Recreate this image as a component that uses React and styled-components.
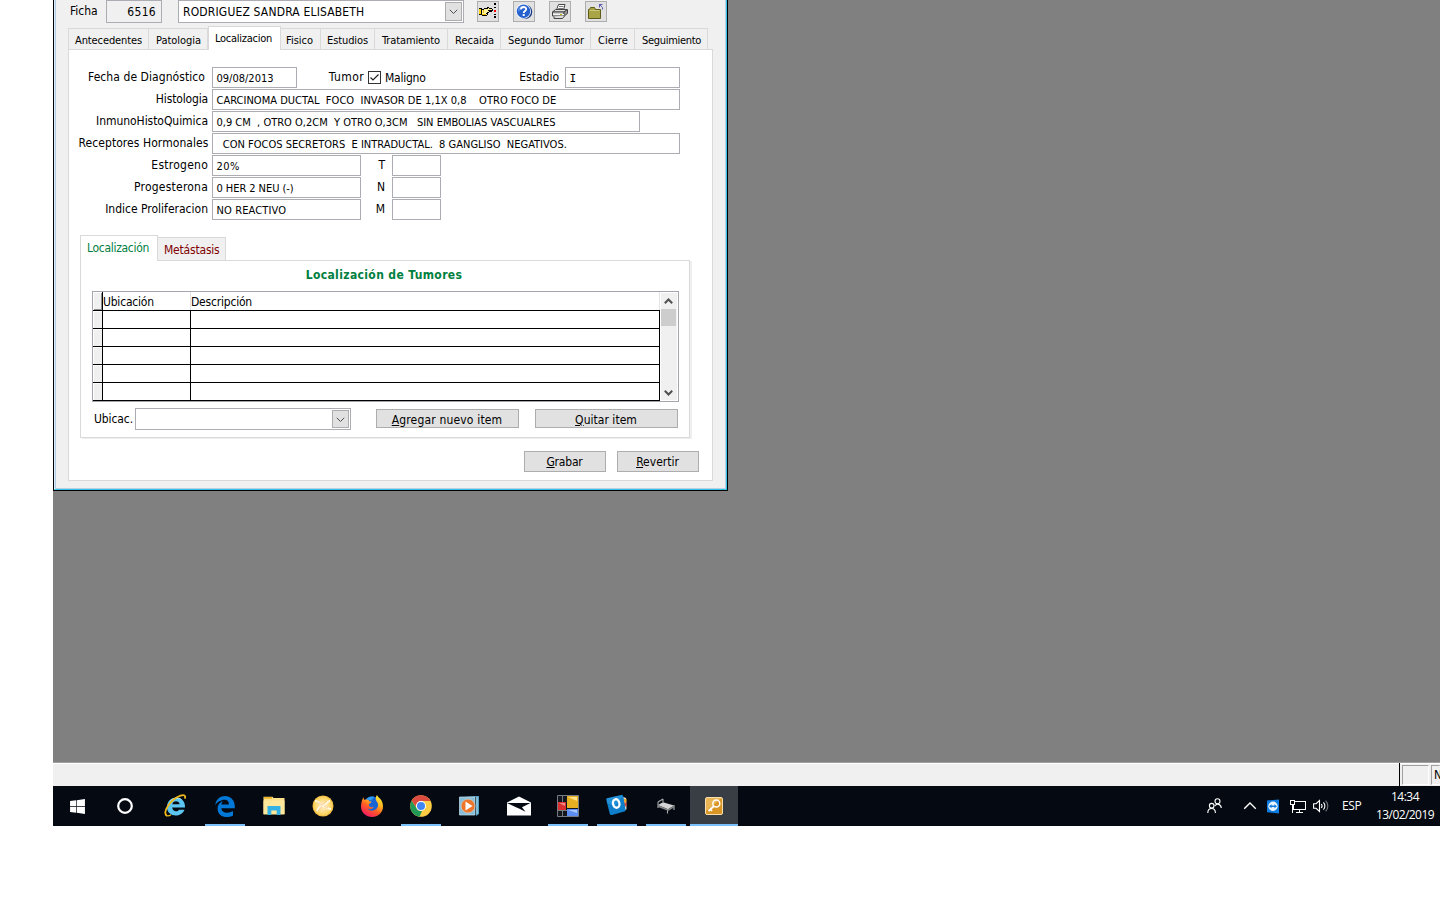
import React from "react";
import styled, { createGlobalStyle, css } from "styled-components";
import { FaWindows } from "react-icons/fa";

const Global = createGlobalStyle`
  * { box-sizing: border-box; }
  body { margin: 0; background: #fff; overflow: hidden; }
`;

const ui = '"DejaVu Sans Condensed", "DejaVu Sans", sans-serif';
const segoe = '"Open Sans", "Noto Sans", sans-serif';

/* ---------- shared text ---------- */
const Text = styled.span`
  white-space: pre;
  flex: none;
  font-family: ${(p) => (p.$slab ? '"DejaVu Sans Mono", monospace' : ui)};
  font-size: ${(p) => (p.$small ? 11 : 12)}px;
  line-height: 14px;
  letter-spacing: ${(p) => p.$track || 0}px;
  color: ${(p) => p.$color || "#000"};
  font-weight: ${(p) => (p.$bold ? 700 : 400)};
  u { text-underline-offset: 1px; text-decoration-thickness: 1px; }
`;

/* ---------- application frame ---------- */
const Screen = styled.main`
  width: 1387px;
  height: 826px;
  margin-left: 53px;
  display: flex;
  flex-direction: column;
  overflow: hidden;
`;
const Workspace = styled.section`
  height: 762px;
  background: #808080;
`;
const WindowFrame = styled.div`
  width: 675px;
  height: 491px;
  border: solid #000;
  border-width: 0 1px 1px 1px;
`;
const WindowBody = styled.div`
  height: 490px;
  background: #f0f0f0;
  border: solid #35c3e8;
  border-width: 0 1px 1px 1px;
  border-left-color: #dcebf8;
  box-shadow: inset -1px -1px 0 #b9cfe6, inset 1px 0 0 #b4cde6;
  padding: 0 12px 0 13px;
`;

/* ---------- header ---------- */
const Header = styled.header`
  height: 26px;
  display: flex;
  align-items: flex-start;
`;
const HeaderLabel = styled.div`
  width: 38px;
  padding: 4px 0 0 2px;
  display: flex;
`;
const RecordBox = styled.div`
  width: 56px;
  height: 23px;
  border: 1px solid #abadb3;
  display: flex;
  justify-content: flex-end;
  padding: 4px 5px 0 0;
  margin-right: 16px;
`;
const Combo = styled.div`
  width: ${(p) => p.$w}px;
  height: ${(p) => p.$h}px;
  flex: none;
  border: 1px solid #abadb3;
  background: #fff;
  display: flex;
  justify-content: space-between;
  padding: 1px 1px 1px 4px;
`;
const ComboText = styled.div`
  display: flex;
  align-items: flex-start;
  padding-top: 3px;
`;
const ComboArrow = styled.div`
  width: 17px;
  border: 1px solid #adadad;
  background: #e1e1e1;
  display: flex;
  align-items: center;
  justify-content: center;
`;
const ToolBar = styled.div`
  display: flex;
  gap: 14px;
  padding: 1px 0 0 13px;
`;
const ToolButton = styled.div`
  width: 22px;
  height: 21px;
  border: 1px solid #adadad;
  background: #e1e1e1;
  display: flex;
  align-items: center;
  justify-content: center;
  svg { display: block; }
`;

/* ---------- tabs ---------- */
const Tabs = styled.nav`
  height: ${(p) => p.$h}px;
  display: flex;
  align-items: flex-end;
`;
const Tab = styled.div`
  width: ${(p) => p.$w}px;
  height: ${(p) => p.$h || 21}px;
  flex: none;
  border: solid #d9d9d9;
  border-width: 1px 1px 0 ${(p) => (p.$first ? 1 : 0)}px;
  padding: 5px 0 0 ${(p) => p.$left}px;
  display: flex;
  align-items: flex-start;
  ${(p) => !p.$active && css`background: #f0f0f0;`}
  ${(p) => p.$active && css`
    border-left-width: 1px;
    background: #fff;
    margin-bottom: -1px;
  `}
`;
const Page = styled.section`
  width: 645px;
  height: 432px;
  border: 1px solid #d9d9d9;
  background: #fff;
  padding-top: 17px;
`;

/* ---------- form ---------- */
const Row = styled.div`
  height: 22px;
  display: flex;
`;
const Label = styled.label`
  width: 143px;
  flex: none;
  padding: 3px ${(p) => p.$gap || 4}px 0 0;
  display: flex;
  justify-content: flex-end;
`;
const InlineLabel = styled(Label)`
  width: ${(p) => p.$w}px;
`;
const Field = styled.div`
  width: ${(p) => p.$w}px;
  height: 21px;
  flex: none;
  border: 1px solid #abadb3;
  background: #fff;
  padding: 4px 0 0 3.5px;
  display: flex;
`;
const CheckBox = styled.div`
  width: 13px;
  height: 13px;
  margin: 4px 4px 0 0;
  border: 1px solid #333;
  background: #fff;
  svg { display: block; }
`;
const CheckLabel = styled.div`
  width: 49px;
  padding-top: 4px;
  display: flex;
  align-items: flex-start;
`;

/* ---------- tumour location ---------- */
const Location = styled.section`
  width: 612px;
  margin: 14px 0 0 11px;
`;
const LocationPage = styled.div`
  width: 610px;
  height: 178px;
  border: 1px solid #d9d9d9;
  background: #fff;
  box-shadow: 2px 1px 0 #efefef;
  padding: 7px 0 0 11px;
`;
const Title = styled.h2`
  height: 23px;
  width: 587px;
  margin: 0;
  display: flex;
  justify-content: center;
  padding-right: 3px;
`;
const GridFrame = styled.div`
  width: 587px;
  height: 111px;
  border: 1px solid #a5a5ad;
  background: #fff;
  display: flex;
  justify-content: space-between;
  padding-right: 1px;
`;
const Cells = styled.div`width: 567px;`;
const GridRow = styled.div`
  height: 18px;
  display: grid;
  grid-template-columns: 10px 88px 469px;
  border-bottom: 1px solid #000;
  ${(p) => p.$head && css`height: 19px;`}
`;
const Selector = styled.div`
  border-right: 1px solid #000;
  background: #f0f0f0;
  box-shadow: inset 1px 1px 0 #fff${(p) => p.$head && ", inset -1px -1px 0 #8c8c8c"};
`;
const Cell = styled.div`
  border-right: 1px solid ${(p) => (p.$head ? "#e3e3e3" : "#000")};
  padding-top: 3px;
  display: flex;
`;
const ScrollTrack = styled.div`
  width: 16px;
  height: 107px;
  margin-top: 1px;
  background: #f0f0f0;
  display: flex;
  flex-direction: column;
  align-items: flex-start;
`;
const ScrollThumb = styled.div`
  width: 15px;
  height: 17px;
  background: #cdcdcd;
  margin: 0 0 59px;
`;
const ScrollButton = styled.div`
  width: 15px;
  height: ${(p) => p.$h}px;
  display: flex;
  align-items: center;
  justify-content: center;
`;
const Actions = styled.div`
  display: flex;
  align-items: flex-start;
  padding-top: 6px;
`;
const ActionLabel = styled.div`
  width: 43px;
  padding: 4px 0 0 2px;
  display: flex;
`;
const Button = styled.div`
  width: ${(p) => p.$w}px;
  height: ${(p) => p.$h}px;
  flex: none;
  border: 1px solid #adadad;
  background: #e1e1e1;
  display: flex;
  justify-content: center;
  padding: 3px 1px 0 0;
  margin: ${(p) => (p.$drop ? 1 : 0)}px 0 0 ${(p) => p.$left || 0}px;
`;
const Footer = styled.footer`
  display: flex;
  gap: 11px;
  padding: 13px 0 0 455px;
`;

/* ---------- status bar ---------- */
const StatusBar = styled.div`
  height: 24px;
  background: #f0f0f0;
  border-top: 1px solid #a0a0a0;
  box-shadow: inset 0 1px 0 #fff;
  display: flex;
  justify-content: flex-end;
`;
const StatusWell = styled.div`
  height: 20px;
  margin: 2px 0 0 2px;
  width: ${(p) => p.$w}px;
  border: 1px solid #a0a0a0;
  border-right-color: ${(p) => (p.$open ? "transparent" : "#fff")};
  border-bottom-color: #fff;
  padding: 2px 0 0 2px;
  display: flex;
  align-items: flex-start;
`;
const StatusDivider = styled.div`
  width: 1px;
  background: #000;
`;

/* ---------- task bar ---------- */
const TaskBar = styled.div`
  height: 40px;
  background: #050a12;
  display: flex;
  justify-content: space-between;
`;
const Apps = styled.div`display: flex;`;
const AppButton = styled.div`
  width: ${(p) => p.$w || 49}px;
  height: 40px;
  display: flex;
  align-items: center;
  justify-content: center;
  color: #fff;
  background: ${(p) => (p.$current ? "#393e44" : "none")};
  ${(p) => p.$running && css`
    background-image: linear-gradient(#7cc0fa, #7cc0fa);
    background-size: ${p.$current ? 48 : 40}px 2px;
    background-position: center bottom;
    background-repeat: no-repeat;
  `}
`;
const Tray = styled.div`
  display: flex;
  align-items: center;
`;
const TrayIcon = styled.div`
  width: ${(p) => p.$w}px;
  display: flex;
  justify-content: center;
  svg { display: block; flex: none; }
`;
const TrayText = styled.span`
  font: 12px/18px ${segoe};
  letter-spacing: ${(p) => p.$track}px;
  color: #fff;
`;
const Language = styled.div`
  width: 45px;
  padding: 0 0 2px 17px;
`;
const Clock = styled.div`
  width: 70px;
  padding-top: 2px;
  height: 40px;
  display: flex;
  flex-direction: column;
  align-items: center;
`;

/* ---------- drawings ---------- */
const Chevron = ({ up, w = 1, color = "#505050", size = 9 }) => (
  <svg width={size} height={size} viewBox="0 0 9 9" fill="none" stroke={color} strokeWidth={w}>
    <path d={up ? "M.8 6.2 4.5 2.5l3.7 3.7" : "M.8 2.8 4.5 6.5l3.7-3.7"} />
  </svg>
);
const Hand = () => (
  <svg width="18" height="17" viewBox="0 0 18 17" shapeRendering="crispEdges">
    <path fill="#000" d="M0 5h3v1h2V5h3V4h2v1h3v1h1v2h-1v1h-3v1h-1v1H9v1H8v1H3v-1H0z" />
    <path fill="#ffd800" d="M0 6h2v5H0z" />
    <path fill="#fff3a0" d="M3 7h2V6h4V5h1v1h3v1H9v1h1v1H8v1H7v1h1v1H3z" />
    <path fill="#e9bf00" d="M3 11h4v1H3zM4 7h1v3H4z" />
    <path fill="#000" d="M15 0h2v2h-2zM15 4h2v1h-2zM15 11h2v1h-2zM15 13h2v2h-2z" />
    <path fill="#f00" d="M15 7h2v2h-2z" />
  </svg>
);
const Help = () => (
  <svg width="18" height="17" viewBox="0 0 18 17">
    <circle cx="10" cy="8.800" r="7.300" fill="#183a82" />
    <circle cx="8.500" cy="8.200" r="7.500" fill="#fff" />
    <circle cx="8.500" cy="8.200" r="6.700" fill="#2461cf" />
    <path d="M3 5.500a6 6 0 0 1 9.500-.8C9 5 6 6.500 3 9z" fill="#6ea4f2" opacity=".6" />
    <path d="M6 6.300c.1-3.100 5.300-3 5.200 0 0 1.800-2.500 1.800-2.500 3.700" fill="none" stroke="#fff" strokeWidth="1.800" />
    <rect x="7.700" y="11" width="2" height="2" fill="#fff" />
  </svg>
);
const Printer = () => (
  <svg width="18" height="17" viewBox="0 0 18 17">
    <path d="m5.500 7 2-5.500H14L12.500 7z" fill="#fff" stroke="#444" />
    <path d="M8 3.500h4.500M7.300 5.500h5" stroke="#777" />
    <path d="m1.500 9 3-2.500H16L13 9z" fill="#ddd" stroke="#444" />
    <path d="M1.500 9H13v4H1.500z" fill="#d0d0d0" stroke="#444" />
    <path d="M13 9l3.500-2.500v4L13 13z" fill="#999" stroke="#444" />
    <path d="M2 11.500h11" stroke="#f3f3f3" />
    <path d="M9 11.500h2" stroke="#c9b800" />
    <path d="M3 13.500v2h8.500l2.500-3" fill="#ddd" stroke="#444" />
  </svg>
);
const Folder = () => (
  <svg width="18" height="17" viewBox="0 0 18 17">
    <path d="M1.500 6.500h1l1-2h4l1 2h5v9h-12z" fill="#a9a547" stroke="#5e5c18" />
    <path d="M2.500 7.500h10" stroke="#c9c67a" />
    <path d="M12 1.500h3.500M12.500 1v3.500M12.500 1.500l3 3v2" stroke="#5a5aae" fill="none" />
  </svg>
);
const EDGE_E = "M2.740 10.810C3.830-1.360 22.500-1.360 21.200 13.560H8.610C8.610 17.850 14.420 19.210 19.540 16.310V20.530C13.250 23.880 5 21.430 5 14.090C5 8.580 9.970 6.810 9.970 6.810C9.970 6.810 8.580 8.580 8.540 10.050H15.700C15.700 2.930 5.900 5.570 2.740 10.810Z";
const Edge = () => (
  <svg width="24" height="24" viewBox="0 0 24 24"><path d={EDGE_E} fill="#0078d7" transform="translate(-.7 -.2) scale(1.060)" /></svg>
);
const Explorer = () => (
  <svg width="24" height="24" viewBox="0 0 24 24">
    <path d="M22 13.500H9.200c.2 4 5 4.800 6.800 2.200h5.500C18.500 24 4 23.500 4 13 4 .5 23 .8 22 13.500zM9.300 10.300h7.400c-.5-4-6.900-4-7.400 0z" fill="#5cc5f0" />
    <path d="M6.500 7.500c3-4.700 10-5.500 13.500-.8-4-2.700-9-2.500-13.500.8z" fill="#b5ecfd" />
    <path d="M4 22C-1.500 19 7.500 5 17.500 1.600c3.500-1.200 5.500-.3 4.300 3" fill="none" stroke="#f0b91c" strokeWidth="1.800" />
    <path d="M2.600 20.500c1 2 3.200 1.800 5.400.3" fill="none" stroke="#f0b91c" strokeWidth="1.300" />
  </svg>
);
const Files = () => (
  <svg width="22" height="20" viewBox="0 0 22 20">
    <path d="M.5 2V.7h9L10.500 2H21.500v16.500H.5z" fill="#ffe08a" />
    <path d="M1 1h8v1.700H1z" fill="#eeb523" />
    <path d="M.5 4.500h21V18H.5z" fill="#ffe79b" />
    <path d="M4.500 10h13v9h-3.800v-4.500H8.300V19H4.500z" fill="#35b2e5" />
  </svg>
);
const Ball = () => (
  <svg width="22" height="22" viewBox="0 0 22 22">
    <defs><radialGradient id="ball"><stop offset=".3" stopColor="#ffe6ab" /><stop offset=".8" stopColor="#fbd565" /><stop offset="1" stopColor="#f0b63a" /></radialGradient></defs>
    <circle cx="11" cy="11" r="10.500" fill="url(#ball)" />
    <path d="M3 6c4 0 5 4 8 4s4-4 7-4M5 16c2-4 4-5 6-5s5 3 8 3" fill="none" stroke="#fff7e0" strokeWidth="2" />
    <path d="m5 7 5 3 5-4M10 11l-4 5M12 11l4 2" fill="none" stroke="#f6c08a" strokeWidth=".8" />
  </svg>
);
const Firefox = () => (
  <svg width="24" height="24" viewBox="0 0 24 24">
    <defs><linearGradient id="fox" x1=".8" y1="0" x2=".2" y2="1"><stop offset="0" stopColor="#fff03d" /><stop offset=".35" stopColor="#ffb01f" /><stop offset=".6" stopColor="#ff5b26" /><stop offset="1" stopColor="#f3106b" /></linearGradient></defs>
    <circle cx="12" cy="11" r="8.500" fill="#1464d8" />
    <path d="M12 2.500c-3 .2-5 1.500-6 3l5 1c2-2 3-2.500 3-4z" fill="#2f9cf0" />
    <path d="M3.500 3c0 1.500.5 2.300 1 3 1.500-.8 3-.5 4.500.2-.5 1 .5 1.300 2.500 1.400 0 1.800-2.500 1.800-2.700 3.200.4 2.700 3 2.800 5 1.600-.8 2.600-4.500 3.600-6.500 1.600 2.500 4.500 10 3 10.700-2.500.4-3.500-2.500-4-2.300-7.500.1-1.200.5-2 1.300-3 1 3 6 4 6 11.500C23 18.500 18 23 12 23S1 18.500 1 12.500C1 9 2 6 3.500 3z" fill="url(#fox)" />
  </svg>
);
const Chrome = () => (
  <svg width="22" height="22" viewBox="0 0 22 22">
    <circle cx="11" cy="11" r="10.800" fill="#fc4" />
    <path d="M1.600 5.700A10.800 10.800 0 0 1 20.500 6H11a5 5 0 0 0-4.800 6.300z" fill="#db4b3f" />
    <path d="M1.600 5.700 6.700 13.500A5 5 0 0 0 12 15.900L9.500 21.700A10.800 10.800 0 0 1 1.600 5.700z" fill="#229a57" />
    <circle cx="11" cy="11" r="5" fill="#fff" />
    <circle cx="11" cy="11" r="4" fill="#4285f4" />
  </svg>
);
const Player = () => (
  <svg width="21" height="20" viewBox="0 0 21 20">
    <path d="M4 0h16v18l-3 2V1z" fill="#4f9cc0" />
    <path d="M.5 1H16v18H.5z" fill="#86bdd8" stroke="#c5e4f1" strokeWidth=".7" />
    <path d="M18 1v17" stroke="#b6dff0" />
    <circle cx="9" cy="10" r="7" fill="#ee762a" stroke="#c9d9df" strokeWidth=".7" />
    <path d="m6.500 5.500 7 4.500-7 4.500z" fill="#fff" />
  </svg>
);
const Mail = () => (
  <svg width="26" height="20" viewBox="0 0 26 20">
    <path d="M1 6.500 13 .5l12 6v13H1z" fill="#fff" />
    <path d="M1 7h23.500L16 11.300l3.500 4.400-6.500-3.200-3-1.200z" fill="#050a12" />
  </svg>
);
const Blocks = () => (
  <svg width="22" height="22" viewBox="0 0 22 22">
    <path d="M.5.5h21v21H.5z" fill="#14161d" stroke="#777b82" />
    <path d="M5.500 0v22M0 15.500h10" stroke="#777b82" />
    <path d="M10 1h11v12H10z" fill="#e7af22" /><path d="M11 2h9v4z" fill="#ffe28a" />
    <path d="M1 7h8v8H1z" fill="#d9302f" /><path d="M2 8h6v3z" fill="#f38a83" />
    <path d="M10 14h11v7H10z" fill="#5d8df0" /><path d="M11 15h9v3z" fill="#a9c7fb" />
  </svg>
);
const Outlook = () => (
  <svg width="22" height="24" viewBox="0 0 22 24">
    <path d="m17 3 3 1 .5 11-2 2z" fill="#e8e4d9" />
    <path d="m18 5 2.500-.3v3.500L18 9z" fill="#f1a42c" /><path d="m18 9 2.500-.5V12L18 13z" fill="#d94b3a" />
    <path d="M1 4.300 15.500 1c1 0 1.500.3 1.700 1.300l2.300 13.200c.1 1-.2 1.600-1.200 2L6 21c-1.200.2-2-.2-2.300-1.500L.3 6C.1 5 .3 4.500 1 4.300z" fill="#0f7fcb" />
    <path d="M1 4.300 15.500 1l1.300 1L9 12 1 9z" fill="#36a4e5" opacity=".5" />
    <ellipse cx="10.200" cy="9.500" rx="3.200" ry="4.300" transform="rotate(-12 10 9.500)" fill="none" stroke="#fff" strokeWidth="2.300" />
  </svg>
);
const Bed = () => (
  <svg width="20" height="16" viewBox="0 0 20 16">
    <path d="M2 4v6M7 1v3M2 4l5-3M18 7v5M11.500 10v5.500" stroke="#aaabac" strokeWidth="1.100" fill="none" />
    <path d="m2 7 5-2.800L18 7.500l-6 3.800z" fill="#d5d5d5" /><path d="m2 7 10 4.300v1.500L2 9zM12 11.300l6-3.800v2l-6 3.500z" fill="#858789" />
  </svg>
);
const Key = () => (
  <svg width="18" height="18" viewBox="0 0 18 18">
    <rect x=".5" y=".5" width="17" height="17" rx="1.500" fill="#d99625" stroke="#f8dfad" />
    <path d="M1 1h16L1 14z" fill="#f3c975" opacity=".6" />
    <circle cx="11.300" cy="6.500" r="3.500" fill="none" stroke="#fff" strokeWidth="1.500" />
    <path d="m9 9-5.500 5M5 12l2 2" stroke="#fff" strokeWidth="1.700" />
  </svg>
);
const People = () => (
  <svg width="15" height="16" viewBox="0 0 15 16" fill="none" stroke="#fff" strokeWidth="1.100">
    <circle cx="10.500" cy="3.200" r="2.500" /><circle cx="4.700" cy="7.700" r="2.300" />
    <path d="M.8 15c0-6 7.600-6 7.600 0M7.700 8c2-3 6.200-2 6.600 2" />
  </svg>
);
const Viewer = () => (
  <svg width="12" height="15" viewBox="0 0 12 15">
    <path d="M0 1.500 12 .5v14l-12-1.300z" fill="#0d7be0" />
    <circle cx="6" cy="7.300" r="4.700" fill="#e9f2fb" />
    <path d="m2 7.300 2.500-2v1.300h3V5.300l2.500 2-2.500 2V8h-3v1.300z" fill="#0d7be0" />
  </svg>
);
const Network = () => (
  <svg width="16" height="14" viewBox="0 0 16 14" fill="none" stroke="#fff" shapeRendering="crispEdges">
    <path d="M5 2.500h10.500v8H3.500V6M9.500 10.500v3M6 13.500h7" /><path d="M.5 1.500h4v4h-4zM2.500 5.500v8" />
  </svg>
);
const Speaker = () => (
  <svg width="17" height="14" viewBox="0 0 17 14" fill="none" stroke="#fff" strokeWidth="1.100">
    <path d="M.6 4.700h2.500L6.500 1.500v11L3.100 9.300H.6zM8.300 5c1 1.200 1 2.800 0 4M10.400 3.400c2 2 2 5.200 0 7.200" />
    <path d="M12.600 1.700c3 3 3 7.600 0 10.600" stroke="#777b80" />
  </svg>
);
const Cortana = () => (
  <svg width="18" height="18"><circle cx="9" cy="9" r="6.800" fill="none" stroke="#fff" strokeWidth="2.200" /></svg>
);

/* ---------- content ---------- */
const TABS = [
  ["Antecedentes", 81, -0.11, 6], ["Patologia", 59, -0.04, 7], ["Localizacion", 73, -0.26, 6],
  ["Fisico", 40, 0, 5], ["Estudios", 54, -0.1, 6], ["Tratamiento", 73, -0.11, 7], ["Recaida", 53, 0, 7],
  ["Segundo Tumor", 90, -0.08, 7], ["Cierre", 44, 0.05, 7], ["Seguimiento", 73, -0.31, 7],
];
const ROWS = [
  ["Histologia", -0.15, "CARCINOMA DUCTAL  FOCO  INVASOR DE 1,1X 0,8    OTRO FOCO DE", 468, 0.02, 4],
  ["InmunoHistoQuimica", -0.05, "0,9 CM  , OTRO O,2CM  Y OTRO O,3CM   SIN EMBOLIAS VASCUALRES", 428, 0, 4],
  ["Receptores Hormonales", 0.07, "  CON FOCOS SECRETORS  E INTRADUCTAL.  8 GANGLISO  NEGATIVOS.", 468, 0, 3.5],
];
const MARKERS = [
  ["Estrogeno", 0.25, "20%", 0.5, "T"],
  ["Progesterona", 0.22, "0 HER 2 NEU (-)", -0.06, "N"],
  ["Indice Proliferacion", 0, "NO REACTIVO", 0.12, "M"],
];
const APPS = [
  { icon: <FaWindows size={17} />, w: 48 },
  { icon: <Cortana />, w: 48 },
  { icon: <Explorer />, w: 52 },
  { icon: <Edge />, w: 48, running: true },
  { icon: <Files /> },
  { icon: <Ball /> },
  { icon: <Firefox /> },
  { icon: <Chrome />, running: true },
  { icon: <Player /> },
  { icon: <Mail />, w: 50 },
  { icon: <Blocks />, w: 48, running: true },
  { icon: <Outlook />, w: 50, running: true },
  { icon: <Bed />, w: 48, running: true },
  { icon: <Key />, running: true, current: true, w: 48 },
];

export default function App() {
  return (
    <>
      <Global />
      <Screen>
        <Workspace>
          <WindowFrame>
            <WindowBody>
              <Header>
                <HeaderLabel><Text>Ficha</Text></HeaderLabel>
                <RecordBox><Text $track={0.3}>6516</Text></RecordBox>
                <Combo $w={286} $h={23}>
                  <ComboText><Text $track={0.17}>RODRIGUEZ SANDRA ELISABETH</Text></ComboText>
                  <ComboArrow><Chevron /></ComboArrow>
                </Combo>
                <ToolBar>
                  <ToolButton><Hand /></ToolButton>
                  <ToolButton><Help /></ToolButton>
                  <ToolButton><Printer /></ToolButton>
                  <ToolButton><Folder /></ToolButton>
                </ToolBar>
              </Header>
              <Tabs $h={23}>
                {TABS.map(([name, w, track, left], i) => (
                  <Tab key={name} $w={w} $first={i === 0} $active={i === 2} $h={i === 2 ? 24 : 21} $left={left}>
                    <Text $small $track={track}>{name}</Text>
                  </Tab>
                ))}
              </Tabs>
              <Page>
                <Row>
                  <Label $gap={7}><Text $track={0.07}>Fecha de Diagnóstico</Text></Label>
                  <Field $w={85}><Text $small>09/08/2013</Text></Field>
                  <InlineLabel $w={71} $gap={4}><Text $track={0.4}>Tumor</Text></InlineLabel>
                  <CheckBox>
                    <svg width="11" height="11" viewBox="0 0 11 11"><path d="M1.500 5.500 4 8l5.500-5.500" fill="none" stroke="#222" strokeWidth="1.200" /></svg>
                  </CheckBox>
                  <CheckLabel><Text $track={-0.25}>Maligno</Text></CheckLabel>
                  <InlineLabel $w={131} $gap={6}><Text>Estadio</Text></InlineLabel>
                  <Field $w={115}><Text $small $slab>I</Text></Field>
                </Row>
                {ROWS.map(([label, lt, value, w, vt, gap]) => (
                  <Row key={label}>
                    <Label $gap={gap}><Text $track={lt}>{label}</Text></Label>
                    <Field $w={w}><Text $small $track={vt}>{value}</Text></Field>
                  </Row>
                ))}
                {MARKERS.map(([label, lt, value, vt, code]) => (
                  <Row key={label}>
                    <Label><Text $track={lt}>{label}</Text></Label>
                    <Field $w={149}><Text $small $track={vt}>{value}</Text></Field>
                    <InlineLabel $w={31} $gap={7}><Text>{code}</Text></InlineLabel>
                    <Field $w={49} />
                  </Row>
                ))}
                <Location>
                  <Tabs $h={25}>
                    <Tab $active $w={78} $h={26} $left={6}><Text $track={-0.3} $color="#008040">Localización</Text></Tab>
                    <Tab $w={68} $h={23} $left={6}><Text $track={-0.2} $color="#800000">Metástasis</Text></Tab>
                  </Tabs>
                  <LocationPage>
                    <Title><Text $bold $track={0.37} $color="#008040">Localización de Tumores</Text></Title>
                    <GridFrame>
                      <Cells>
                        <GridRow $head>
                          <Selector $head />
                          <Cell $head><Text $track={-0.2}>Ubicación</Text></Cell>
                          <Cell $head><Text $track={-0.2}>Descripción</Text></Cell>
                        </GridRow>
                        {[1, 2, 3, 4, 5].map((n) => (
                          <GridRow key={n}><Selector /><Cell /><Cell /></GridRow>
                        ))}
                      </Cells>
                      <ScrollTrack>
                        <ScrollButton $h={16}><Chevron up w={2} /></ScrollButton>
                        <ScrollThumb />
                        <ScrollButton $h={14}><Chevron w={2} /></ScrollButton>
                      </ScrollTrack>
                    </GridFrame>
                    <Actions>
                      <ActionLabel><Text $track={-0.1}>Ubicac.</Text></ActionLabel>
                      <Combo $w={216} $h={22}><span /><ComboArrow><Chevron /></ComboArrow></Combo>
                      <Button $w={143} $h={19} $left={25} $drop><Text $track={0.17}><u>A</u>gregar nuevo item</Text></Button>
                      <Button $w={143} $h={19} $left={16} $drop><Text $track={0.03}><u>Q</u>uitar item</Text></Button>
                    </Actions>
                  </LocationPage>
                </Location>
                <Footer>
                  <Button $w={82} $h={21}><Text $track={-0.2}><u>G</u>rabar</Text></Button>
                  <Button $w={82} $h={21}><Text><u>R</u>evertir</Text></Button>
                </Footer>
              </Page>
            </WindowBody>
          </WindowFrame>
        </Workspace>
        <StatusBar>
          <StatusDivider />
          <StatusWell $w={27} />
          <StatusWell $w={9} $open><Text>N</Text></StatusWell>
        </StatusBar>
        <TaskBar>
          <Apps>
            {APPS.map((a, i) => (
              <AppButton key={i} $w={a.w} $running={a.running} $current={a.current}>{a.icon}</AppButton>
            ))}
          </Apps>
          <Tray>
            <TrayIcon $w={36}><People /></TrayIcon>
            <TrayIcon $w={36}><Chevron up color="#fff" size={14} w={0.9} /></TrayIcon>
            <TrayIcon $w={10}><Viewer /></TrayIcon>
            <TrayIcon $w={40}><Network /></TrayIcon>
            <TrayIcon $w={7}><Speaker /></TrayIcon>
            <Language><TrayText $track={-0.4}>ESP</TrayText></Language>
            <Clock>
              <TrayText $track={-0.5}>14:34</TrayText>
              <TrayText $track={-0.57}>13/02/2019</TrayText>
            </Clock>
          </Tray>
        </TaskBar>
      </Screen>
    </>
  );
}
